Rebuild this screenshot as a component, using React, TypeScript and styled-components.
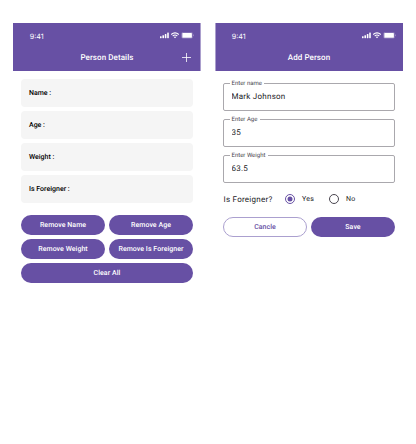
import React from 'react';
import styled, { createGlobalStyle } from 'styled-components';

const purple = '#6750a4';

const GlobalStyle = createGlobalStyle`
  * { box-sizing: border-box; }
  body {
    margin: 0;
    background: #fff;
    font-family: Roboto, sans-serif;
    text-rendering: geometricPrecision;
  }
`;

const Board = styled.main`
  width: 416px;
  height: 444px;
  padding: 23px 13px 0;
  display: flex;
  justify-content: space-between;
  overflow: hidden;
`;

const Phone = styled.section`
  width: 188px;
`;

const Header = styled.header<{ $edge: 'left' | 'right' }>`
  height: 48px;
  background: linear-gradient(to ${({ $edge }) => $edge}, ${purple} 187px, #ab9fcd 187px);
  color: #fff;
`;

const StatusBar = styled.div`
  height: 24px;
  padding: 3px 3px 0 16.7px;
  display: flex;
  align-items: center;
  justify-content: space-between;
  font: 400 7.2px/10px Inter, sans-serif;
`;

const StatusIcons = styled.svg`
  display: block;
  margin-top: -2px;
`;

const TitleBar = styled.div`
  height: 24px;
  padding-bottom: 3px;
  display: grid;
  grid-template-columns: 29px 1fr 29px;
  align-items: center;
  justify-items: center;
`;

const AddIcon = styled.svg`
  display: block;
  margin-right: 1px;
`;

const Title = styled.h1`
  grid-column: 2;
  margin: 0;
  font-size: 8px;
  line-height: 12px;
  font-weight: 500;
  letter-spacing: 0.08px;
`;

const Content = styled.div`
  padding: 8px 8px 0;
`;

const CardList = styled.div`
  display: grid;
  gap: 4px;
`;

const Card = styled.div`
  height: 28px;
  padding: 0 8px;
  display: flex;
  align-items: center;
  border-radius: 4px;
  background: #f5f5f5;
  color: #000;
  font-size: 7px;
  font-weight: 500;
`;

const Actions = styled.div<{ $top: number }>`
  margin-top: ${({ $top }) => $top}px;
  display: grid;
  grid-template-columns: 1fr 1fr;
  gap: 4px;
`;

const Button = styled.button<{ $outlined?: boolean; $wide?: boolean }>`
  height: 20px;
  padding: 0;
  grid-column: ${({ $wide }) => ($wide ? '1 / -1' : 'auto')};
  border: ${({ $outlined }) => ($outlined ? '1px solid #aba0cf' : '0')};
  border-radius: 10px;
  background: ${({ $outlined }) => ($outlined ? '#fff' : purple)};
  color: ${({ $outlined }) => ($outlined ? purple : '#fff')};
  font: 500 7px/10px Roboto, sans-serif;
  letter-spacing: 0.05px;
  text-rendering: inherit;
  white-space: nowrap;
`;

const Fields = styled.div`
  display: grid;
  gap: 4px;
`;

const Field = styled.fieldset`
  height: 32px;
  min-width: 0;
  margin: 0;
  padding: 0 7.5px;
  border: 1px solid #aaa8ad;
  border-radius: 2px;
`;

const Legend = styled.legend`
  height: 8px;
  margin-left: -2px;
  padding: 0 2.5px 0 2px;
  color: #49454f;
  font-size: 6px;
  line-height: 10px;
`;

const Input = styled.input`
  display: block;
  width: 100%;
  height: 12px;
  margin-top: 4px;
  padding: 0;
  border: 0;
  outline: 0;
  background: transparent;
  color: #1c1b1f;
  font: 400 8px/12px Roboto, sans-serif;
  letter-spacing: 0.25px;
  text-rendering: inherit;
`;

const Question = styled.div`
  height: 20px;
  margin-top: 6px;
  display: flex;
  align-items: center;
  color: #1c1b1f;
  font-size: 8px;
  letter-spacing: 0.25px;
`;

const QuestionText = styled.span`
  width: 62px;
  padding-left: 0.5px;
`;

const Option = styled.label`
  width: 44px;
  display: flex;
  align-items: center;
  gap: 7px;
  font-size: 7px;
`;

const signalBars = [
  { x: 0, h: 2 },
  { x: 2.4, h: 3 },
  { x: 4.8, h: 4.3 },
  { x: 7.2, h: 5.6 },
];

function Status() {
  return (
    <StatusBar>
      <span>9:41</span>
      <StatusIcons width="38" height="7" viewBox="0 0 38 7" fill="#fff">
        {signalBars.map((b) => (
          <rect key={b.x} x={b.x} y={6.2 - b.h} width="1.6" height={b.h} rx="0.4" />
        ))}
        <g fill="none" stroke="#fff" strokeWidth="1.05">
          <path d="M11.2 2.5Q15 -0.7 18.8 2.5" />
          <path d="M12.7 4Q15 2.1 17.3 4" />
        </g>
        <path d="M13.8 5Q15 4.1 16.2 5L15 6.3Z" />
        <rect x="21.5" y="0.4" width="11.2" height="5.8" rx="1.5" fill="none" stroke="#fff" strokeOpacity="0.4" strokeWidth="0.5" />
        <rect x="22.3" y="0.9" width="9.6" height="4.9" rx="0.6" />
        <path d="M33.2 2.3v2q.7-.4.7-1t-.7-1Z" opacity="0.45" />
      </StatusIcons>
    </StatusBar>
  );
}

function Radio({ checked }: { checked?: boolean }) {
  return (
    <svg width="10" height="10" viewBox="0 0 10 10">
      <circle cx="5" cy="5" r="4.5" fill="none" stroke={checked ? purple : '#49454f'} />
      {checked && <circle cx="5" cy="5" r="2.5" fill={purple} />}
    </svg>
  );
}

const details = ['Name :', 'Age :', 'Weight :', 'Is Foreigner :'];
const removals = ['Remove Name', 'Remove Age', 'Remove Weight', 'Remove Is Foreigner'];
const fields = [
  { label: 'Enter name', value: 'Mark Johnson' },
  { label: 'Enter Age', value: '35' },
  { label: 'Enter Weight', value: '63.5' },
];

export default function App() {
  return (
    <>
      <GlobalStyle />
      <Board>
        <Phone>
          <Header $edge="right">
            <Status />
            <TitleBar>
              <Title>Person Details</Title>
              <AddIcon width="9" height="9" viewBox="0 0 9 9" stroke="#fff" strokeWidth="0.8">
                <path d="M4.5 0v9M0 4.5h9" />
              </AddIcon>
            </TitleBar>
          </Header>
          <Content>
            <CardList>
              {details.map((d) => <Card key={d}>{d}</Card>)}
            </CardList>
            <Actions $top={12}>
              {removals.map((r) => <Button key={r}>{r}</Button>)}
              <Button $wide>Clear All</Button>
            </Actions>
          </Content>
        </Phone>
        <Phone>
          <Header $edge="left">
            <Status />
            <TitleBar>
              <Title>Add Person</Title>
            </TitleBar>
          </Header>
          <Content>
            <Fields>
              {fields.map((f) => (
                <Field key={f.label}>
                  <Legend>{f.label}</Legend>
                  <Input defaultValue={f.value} aria-label={f.label} />
                </Field>
              ))}
            </Fields>
            <Question>
              <QuestionText>Is Foreigner?</QuestionText>
              <Option><Radio checked />Yes</Option>
              <Option><Radio />No</Option>
            </Question>
            <Actions $top={8}>
              <Button $outlined>Cancle</Button>
              <Button>Save</Button>
            </Actions>
          </Content>
        </Phone>
      </Board>
    </>
  );
}
